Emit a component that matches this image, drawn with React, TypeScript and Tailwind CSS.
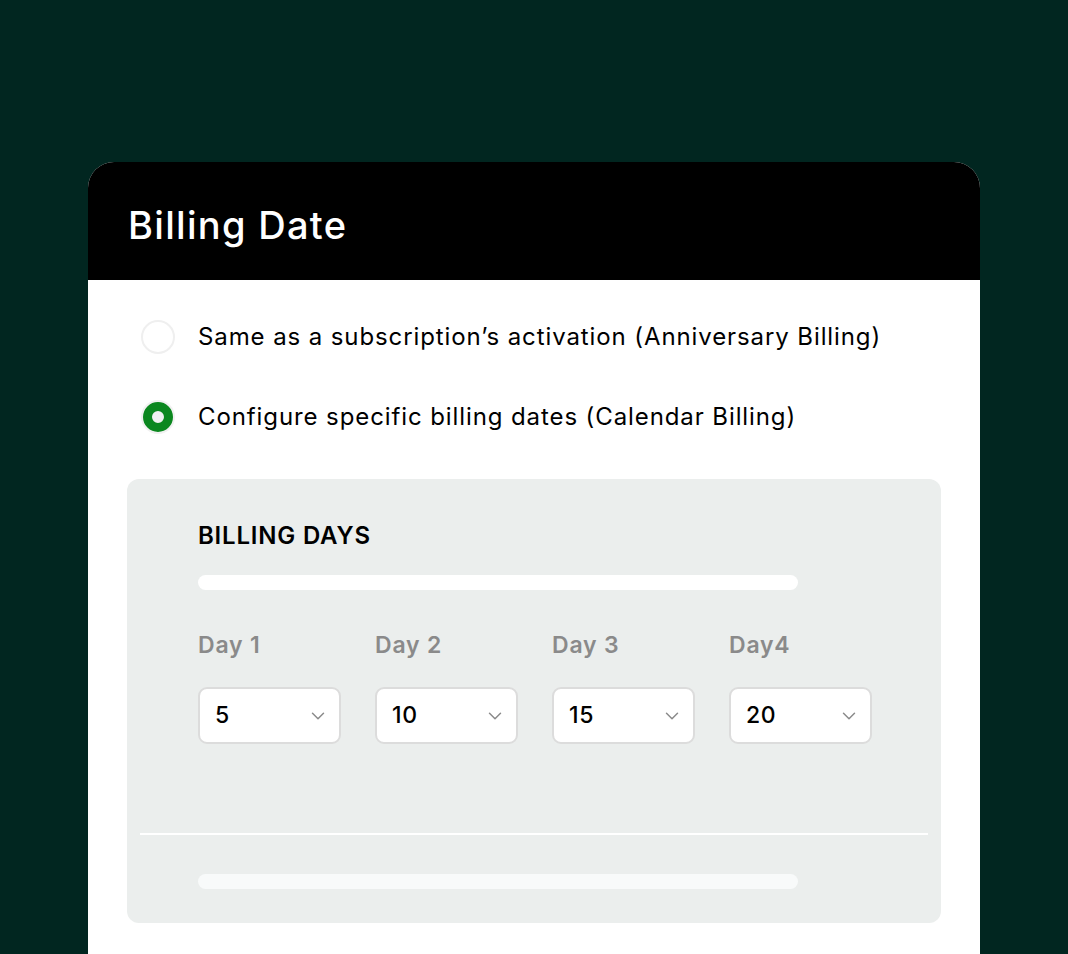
import { ChevronDown } from "lucide-react";

const days = [
  { label: "Day 1", value: "5" },
  { label: "Day 2", value: "10" },
  { label: "Day 3", value: "15" },
  { label: "Day4", value: "20" },
];

const DaySelect = ({ label, value }: { label: string; value: string }) => (
  <div className="flex w-[143px] flex-col">
    <span className="text-[23px] font-semibold leading-none tracking-[0.8px] text-[#8a8a8a]">{label}</span>
    <div className="mt-[30px] flex h-[57px] items-center justify-between rounded-[9px] border-2 border-[#dcdcdc] bg-white pl-[15px] pr-[10px]">
      <span className="text-[23px] font-medium tracking-[0.6px] text-black">{value}</span>
      <ChevronDown className="h-[22px] w-[22px] text-[#8a8a8a]" strokeWidth={1.6} />
    </div>
  </div>
);

export default function App() {
  return (
    <div
      className="h-[954px] w-full overflow-hidden bg-[#012620] pt-[162px]"
      style={{ fontFamily: "Inter, 'Noto Sans', sans-serif" }}
    >
      <div className="mx-[88px] overflow-hidden rounded-t-[26px] bg-white">
        <div className="flex h-[118px] items-center bg-black pl-[40px] pt-[8px]">
          <h1 className="text-[38px] font-medium tracking-[1.3px] text-white">Billing Date</h1>
        </div>
        <div className="px-[39px] pb-[40px] pt-[40px]">
          <div className="flex flex-col gap-[46px] pl-[14px]">
            <label className="flex items-center gap-[23px]">
              <span className="h-[34px] w-[34px] rounded-full border-2 border-[#efefef] bg-white" />
              <span className="text-[24px] leading-[34px] tracking-[0.9px] text-black">
                Same as a subscription’s activation (Anniversary Billing)
              </span>
            </label>
            <label className="flex items-center gap-[23px]">
              <span className="flex h-[34px] w-[34px] items-center justify-center rounded-full border-2 border-[#f1f1f1]">
                <span className="h-[30px] w-[30px] rounded-full border-[9px] border-[#0b871f] bg-[#f0f1f1]" />
              </span>
              <span className="text-[24px] leading-[34px] tracking-[0.9px] text-black">
                Configure specific billing dates (Calendar Billing)
              </span>
            </label>
          </div>
          <div className="mt-[45px] rounded-[12px] bg-[#ebeeed] px-[13px] pb-[34px] pt-[44px]">
            <div className="pl-[58px]">
              <h2 className="text-[24px] font-semibold leading-[26px] tracking-[0.8px] text-black">BILLING DAYS</h2>
              <div className="mt-[26px] h-[15px] w-[600px] rounded-full bg-white" />
              <div className="mt-[44px] flex gap-[34px]">
                {days.map((d) => (
                  <DaySelect key={d.label} label={d.label} value={d.value} />
                ))}
              </div>
            </div>
            <div className="mt-[89px] h-[2px] bg-white" />
            <div className="ml-[58px] mt-[39px] h-[15px] w-[600px] rounded-full bg-[#f8fafa]" />
          </div>
        </div>
      </div>
    </div>
  );
}
